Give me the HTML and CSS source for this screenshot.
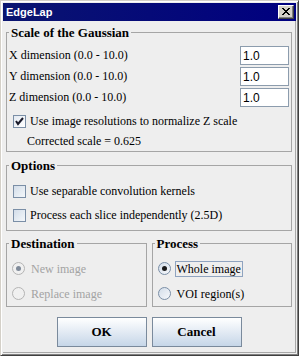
FILE: index.html
```html
<!DOCTYPE html>
<html lang="en">
<head>
    <meta charset="UTF-8">
    <title>EdgeLap</title>
    <link rel="stylesheet" href="styles.css">
</head>
<body>

<div class="window">
    <div class="titlebar">
        <span class="title">EdgeLap</span>
        <span class="close-btn">
            <svg width="8" height="7" viewBox="0 0 8 7"><path d="M0 0 L7 7 M1 0 L8 7 M7 0 L0 7 M8 0 L1 7" stroke="#000" stroke-width="1" shape-rendering="crispEdges"/></svg>
        </span>
    </div>

    <div class="content">
        <fieldset class="group">
            <legend>Scale of the Gaussian</legend>
            <div class="field-row">
                <span>X dimension (0.0 - 10.0)</span>
                <input class="num" type="text" value="1.0">
            </div>
            <div class="field-row">
                <span>Y dimension (0.0 - 10.0)</span>
                <input class="num" type="text" value="1.0">
            </div>
            <div class="field-row">
                <span>Z dimension (0.0 - 10.0)</span>
                <input class="num" type="text" value="1.0">
            </div>
            <div class="check-row first">
                <span class="box checked">
                    <svg width="9" height="9" viewBox="0 0 9 9"><path d="M1 4 L3 7 L8 1" fill="none" stroke="#1a1a2a" stroke-width="2"/></svg>
                </span>
                <span>Use image resolutions to normalize Z scale</span>
            </div>
            <div class="corrected">Corrected scale = 0.625</div>
        </fieldset>

        <fieldset class="group options">
            <legend>Options</legend>
            <div class="check-row">
                <span class="box"></span>
                <span>Use separable convolution kernels</span>
            </div>
            <div class="check-row">
                <span class="box"></span>
                <span>Process each slice independently (2.5D)</span>
            </div>
        </fieldset>

        <div class="pair">
            <fieldset class="group small">
                <legend>Destination</legend>
                <div class="radio-row disabled">
                    <span class="radio on"></span>
                    <span class="radio-label">New image</span>
                </div>
                <div class="radio-row disabled">
                    <span class="radio"></span>
                    <span class="radio-label">Replace image</span>
                </div>
            </fieldset>
            <fieldset class="group small">
                <legend>Process</legend>
                <div class="radio-row">
                    <span class="radio on"></span>
                    <span class="radio-label focus">Whole image</span>
                </div>
                <div class="radio-row">
                    <span class="radio"></span>
                    <span class="radio-label">VOI region(s)</span>
                </div>
            </fieldset>
        </div>

        <div class="buttons">
            <button class="btn">OK</button>
            <button class="btn">Cancel</button>
        </div>
    </div>
</div>

</body>
</html>
```

FILE: styles.css
```css
body {
    margin: 0;
    background: #ffffff;
    font-family: 'Liberation Serif', 'Times New Roman', serif;
    font-size: 12px;
    color: #000;
}

.window {
    width: 299px;
    height: 356px;
    box-sizing: border-box;
    border: 1px solid;
    border-color: #d4d0c8 #404040 #404040 #d4d0c8;
    box-shadow: inset 1px 1px #ffffff, inset -1px -1px #808080;
    padding: 2px;
    background: #eeeeee;
    display: flex;
    flex-direction: column;
}

.titlebar {
    height: 18px;
    flex: none;
    display: flex;
    align-items: center;
    justify-content: space-between;
    padding: 0 2px 0 3px;
    background: linear-gradient(90deg, #0a1470, #000080);
}

.title {
    font-family: 'Liberation Sans', Arial, sans-serif;
    font-weight: bold;
    font-size: 11px;
    color: #ffffff;
}

.close-btn {
    width: 16px;
    height: 14px;
    box-sizing: border-box;
    background: #d4d0c8;
    border: 1px solid;
    border-color: #ffffff #404040 #404040 #ffffff;
    box-shadow: inset -1px -1px #808080;
    display: flex;
    align-items: center;
    justify-content: center;
    padding: 0 1px 1px 0;
}

.close-btn svg {
    display: block;
}

.content {
    flex: 1;
    padding: 4px 3px 0 3px;
    border-right: 1px solid #a8a8a8;
    border-bottom: 1px solid #a8a8a8;
}

.group {
    margin: 0;
    padding: 5px 2px 0 2px;
    border: 1px solid #a5a5a5;
    min-width: 0;
}

.group legend {
    padding: 0 2px;
    font-weight: bold;
    font-size: 13px;
    line-height: 15px;
}

.field-row {
    height: 21px;
    display: flex;
    align-items: center;
    justify-content: space-between;
}

.num {
    width: 49px;
    height: 19px;
    box-sizing: border-box;
    margin: 0;
    padding: 0 2px;
    border: 1px solid #8c9cad;
    background: #ffffff;
    font-family: 'Liberation Sans', Arial, sans-serif;
    font-size: 12px;
    color: #000;
}

.check-row {
    height: 24px;
    display: flex;
    align-items: center;
    gap: 4px;
    padding-left: 4px;
}

.check-row.first {
    height: 20px;
    margin-top: 3px;
}

.box {
    width: 13px;
    height: 13px;
    box-sizing: border-box;
    border: 1px solid #7a8ea6;
    background: linear-gradient(135deg, #d3dde9, #f4f7fa);
    display: flex;
    align-items: center;
    justify-content: center;
}

.box.checked {
    background: linear-gradient(135deg, #e3e9f1, #ffffff);
}

.corrected {
    height: 20px;
    line-height: 20px;
    padding-left: 18px;
}

.options {
    margin-top: 6px;
    padding-top: 6px;
    padding-bottom: 3px;
}

.pair {
    margin-top: 5px;
    display: grid;
    grid-template-columns: 1fr 1fr;
    gap: 5px;
}

.small {
    padding-top: 5px;
}

.radio-row {
    height: 25px;
    display: flex;
    align-items: center;
    padding-left: 3px;
}

.radio {
    width: 13px;
    height: 13px;
    box-sizing: border-box;
    border-radius: 50%;
    border: 1px solid #7a8ea6;
    background: linear-gradient(135deg, #d3dde9, #f6f8fb);
    display: flex;
    align-items: center;
    justify-content: center;
    margin-right: 4px;
}

.radio.on::after {
    content: "";
    width: 5px;
    height: 5px;
    border-radius: 50%;
    background: #1a1a1a;
}

.radio-label {
    padding: 0 1px;
    border: 1px solid transparent;
    line-height: 14px;
}

.radio-label.focus {
    border-color: #8fa3bf;
}

.disabled .radio {
    border-color: #b4b4b4;
    background: #f0f0f0;
}

.disabled .radio.on::after {
    background: #7f8a99;
}

.disabled .radio-label {
    color: #a3a3a3;
}

.buttons {
    margin-top: 10px;
    display: flex;
    justify-content: center;
    gap: 5px;
}

.btn {
    width: 90px;
    height: 30px;
    margin: 0;
    border: 1px solid #7a8a9c;
    background: linear-gradient(180deg, #ffffff, #c6d6e8);
    font-family: 'Liberation Serif', 'Times New Roman', serif;
    font-weight: bold;
    font-size: 13px;
    color: #000;
}
```
